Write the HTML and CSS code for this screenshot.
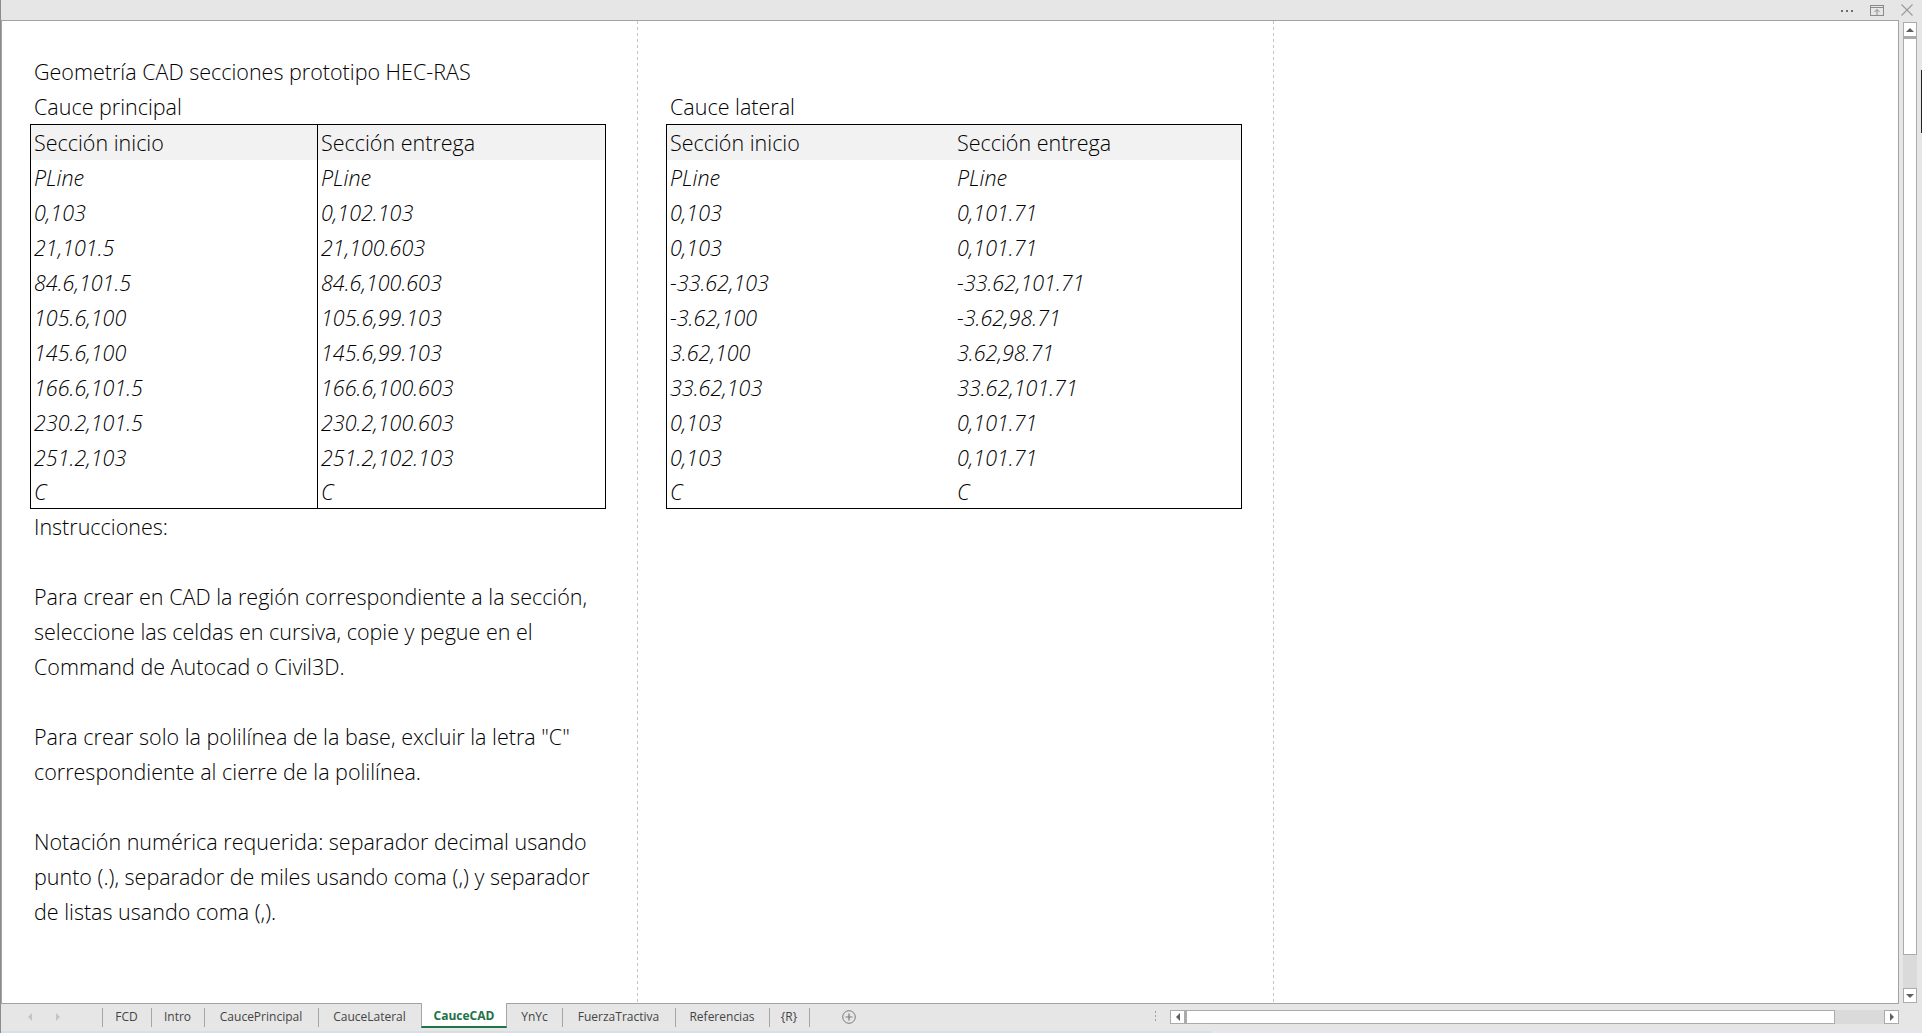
FILE: index.html
```html
<!DOCTYPE html>
<html lang="es">
<head>
<meta charset="utf-8">
<title>CauceCAD</title>
<link rel="stylesheet" href="styles.css">
</head>
<body>
<div class="window">
  <div class="titlebar">
    <svg class="tb-icon dots" width="14" height="4" viewBox="0 0 14 4"><rect x="0" y="1" width="2" height="2" fill="#6e6e6e"/><rect x="5" y="1" width="2" height="2" fill="#6e6e6e"/><rect x="10" y="1" width="2" height="2" fill="#6e6e6e"/></svg>
    <svg class="tb-icon restore" width="14" height="11" viewBox="0 0 14 11"><rect x="0.5" y="0.5" width="13" height="10" fill="none" stroke="#8a8a8a"/><line x1="0.5" y1="2.5" x2="13.5" y2="2.5" stroke="#8a8a8a"/><path d="M7 10V4.5M4.5 7L7 4.5L9.5 7" fill="none" stroke="#8a8a8a"/></svg>
    <svg class="tb-icon close" width="12" height="12" viewBox="0 0 12 12"><path d="M0.5 0.5L11.5 11.5M11.5 0.5L0.5 11.5" stroke="#9a9a9a" stroke-width="1.1"/></svg>
  </div>

  <div class="main">
    <div class="sheet">
      <div class="pagebreak pb1"></div>
      <div class="pagebreak pb2"></div>

      <div class="block">
        <div class="row">Geometría CAD secciones prototipo HEC-RAS</div>
        <div class="row">Cauce principal</div>
        <div class="tbl ruled">
          <div class="cell head">Sección inicio</div><div class="cell head">Sección entrega</div>
          <div class="cell it">PLine</div><div class="cell it">PLine</div>
          <div class="cell it">0,103</div><div class="cell it">0,102.103</div>
          <div class="cell it">21,101.5</div><div class="cell it">21,100.603</div>
          <div class="cell it">84.6,101.5</div><div class="cell it">84.6,100.603</div>
          <div class="cell it">105.6,100</div><div class="cell it">105.6,99.103</div>
          <div class="cell it">145.6,100</div><div class="cell it">145.6,99.103</div>
          <div class="cell it">166.6,101.5</div><div class="cell it">166.6,100.603</div>
          <div class="cell it">230.2,101.5</div><div class="cell it">230.2,100.603</div>
          <div class="cell it">251.2,103</div><div class="cell it">251.2,102.103</div>
          <div class="cell it last">C</div><div class="cell it last">C</div>
        </div>
        <div class="row">Instrucciones:</div>
        <div class="row"></div>
        <div class="row">Para crear en CAD la región correspondiente a la sección,</div>
        <div class="row">seleccione las celdas en cursiva, copie y pegue en el</div>
        <div class="row">Command de Autocad o Civil3D.</div>
        <div class="row"></div>
        <div class="row">Para crear solo la polilínea de la base, excluir la letra "C"</div>
        <div class="row">correspondiente al cierre de la polilínea.</div>
        <div class="row"></div>
        <div class="row">Notación numérica requerida: separador decimal usando</div>
        <div class="row">punto (.), separador de miles usando coma (,) y separador</div>
        <div class="row">de listas usando coma (,).</div>
      </div>

      <div class="block">
        <div class="row"></div>
        <div class="row">Cauce lateral</div>
        <div class="tbl">
          <div class="cell head">Sección inicio</div><div class="cell head">Sección entrega</div>
          <div class="cell it">PLine</div><div class="cell it">PLine</div>
          <div class="cell it">0,103</div><div class="cell it">0,101.71</div>
          <div class="cell it">0,103</div><div class="cell it">0,101.71</div>
          <div class="cell it">-33.62,103</div><div class="cell it">-33.62,101.71</div>
          <div class="cell it">-3.62,100</div><div class="cell it">-3.62,98.71</div>
          <div class="cell it">3.62,100</div><div class="cell it">3.62,98.71</div>
          <div class="cell it">33.62,103</div><div class="cell it">33.62,101.71</div>
          <div class="cell it">0,103</div><div class="cell it">0,101.71</div>
          <div class="cell it">0,103</div><div class="cell it">0,101.71</div>
          <div class="cell it last">C</div><div class="cell it last">C</div>
        </div>
      </div>
    </div>

    <div class="vscroll">
      <div class="sb-btn"><span class="tri up"></span></div>
      <div class="sb-thumb v"></div>
      <div class="sb-trough v"></div>
      <div class="sb-btn"><span class="tri down"></span></div>
    </div>
  </div>

  <div class="tabbar">
    <div class="tabs">
      <div class="nav"><span class="tri left light"></span><span class="tri right light"></span></div>
      <div class="tab">FCD</div>
      <div class="tab">Intro</div>
      <div class="tab">CaucePrincipal</div>
      <div class="tab">CauceLateral</div>
      <div class="tab active">CauceCAD</div>
      <div class="tab">YnYc</div>
      <div class="tab">FuerzaTractiva</div>
      <div class="tab">Referencias</div>
      <div class="tab">{R}</div>
      <div class="tab add">
        <svg width="14" height="14" viewBox="0 0 14 14"><circle cx="7" cy="7" r="6.3" fill="none" stroke="#7a7a7a"/><path d="M7 3.5V10.5M3.5 7H10.5" stroke="#7a7a7a" stroke-width="1.2"/></svg>
      </div>
    </div>
    <div class="splitter"><i></i><i></i><i></i></div>
    <div class="hscroll">
      <div class="sb-btn"><span class="tri left"></span></div>
      <div class="sb-thumb h"></div>
      <div class="sb-trough h"></div>
      <div class="sb-btn"><span class="tri right"></span></div>
    </div>
  </div>
  <div class="strip"></div>
  <div class="edge-mark"></div>
</div>
</body>
</html>
```
FILE: styles.css
```css
html, body {
  margin: 0;
  padding: 0;
  background: #e6e6e6;
  overflow: hidden;
}

.window {
  position: relative;
  width: 1922px;
  height: 1033px;
  box-sizing: border-box;
  border-left: 1px solid #8c8c8c;
  display: flex;
  flex-direction: column;
  background: #e6e6e6;
  font-family: "Open Sans", "Noto Sans", sans-serif;
}

/* ---------- title bar ---------- */
.titlebar {
  height: 20px;
  flex: none;
  display: flex;
  align-items: center;
  justify-content: flex-end;
  padding-right: 9px;
}
.tb-icon { display: block; }
.dots { margin-right: 15px; margin-top: 1px; }
.restore { margin-right: 17px; }
.close { margin-right: 0; }

/* ---------- sheet area ---------- */
.main {
  height: 984px;
  flex: none;
  display: flex;
}

.sheet {
  position: relative;
  flex: 1;
  background: #fff;
  border: 1px solid #a3a3a3;
  padding: 33px 0 0 28px;
  display: flex;
  gap: 60px;
  overflow: hidden;
  color: #000;
  font-weight: 300;
  font-size: 21.5px;
}

.pagebreak {
  position: absolute;
  top: 0;
  bottom: 0;
  width: 1px;
  background: repeating-linear-gradient(to bottom, #c4c4c4 0 3px, transparent 3px 6px);
}
.pb1 { left: 635px; }
.pb2 { left: 1271px; }

.block {
  width: 576px;
  flex: none;
}

.row {
  height: 35px;
  line-height: 35px;
  padding-left: 4px;
  white-space: nowrap;
}

.tbl {
  display: grid;
  grid-template-columns: 287px 287px;
  border: 1px solid #000;
}

.cell {
  height: 35px;
  line-height: 35px;
  padding-left: 3px;
  white-space: nowrap;
  box-sizing: border-box;
}
.cell.last { height: 33px; line-height: 33px; }
.cell.head { background: #f2f2f2; }
.cell.it { font-style: italic; }

.ruled .cell:nth-child(odd) { border-right: 1px solid #000; }

/* ---------- vertical scrollbar ---------- */
.vscroll {
  width: 23px;
  flex: none;
  box-sizing: border-box;
  padding: 2px 5px 0 4px;
  display: flex;
  flex-direction: column;
}

.sb-btn {
  box-sizing: border-box;
  width: 14px;
  height: 15px;
  border: 1px solid #ababab;
  background: #fff;
  display: flex;
  align-items: center;
  justify-content: center;
  flex: none;
}

.sb-thumb.v {
  height: 918px;
  box-sizing: border-box;
  border: 1px solid #ababab;
  border-top-width: 2px;
  background: #fff;
}
.sb-trough.v {
  height: 33px;
  background: #dadada;
}

.tri { display: block; width: 0; height: 0; }
.tri.up { border-left: 4px solid transparent; border-right: 4px solid transparent; border-bottom: 4px solid #606060; }
.tri.down { border-left: 4px solid transparent; border-right: 4px solid transparent; border-top: 4px solid #606060; }
.tri.left { border-top: 4px solid transparent; border-bottom: 4px solid transparent; border-right: 4px solid #606060; }
.tri.right { border-top: 4px solid transparent; border-bottom: 4px solid transparent; border-left: 4px solid #606060; }
.tri.light.left { border-right-color: #c4c4c4; }
.tri.light.right { border-left-color: #c4c4c4; }

/* ---------- tab bar ---------- */
.tabbar {
  height: 27px;
  flex: none;
  display: flex;
  align-items: stretch;
}

.tabs {
  display: grid;
  grid-template-columns: 101px 49px 53px 114px 103px 86px 55px 113px 94px 40px 80px;
  align-items: stretch;
}

.nav {
  display: flex;
  align-items: center;
  gap: 24px;
  padding-left: 27px;
  padding-bottom: 2px;
}

.tab {
  position: relative;
  display: flex;
  align-items: center;
  justify-content: center;
  font-size: 12px;
  color: #444;
  padding-bottom: 2px;
  white-space: nowrap;
}
.tab::before {
  content: "";
  position: absolute;
  left: 0;
  top: 4px;
  height: 19px;
  width: 1px;
  background: #a6a6a6;
}
.tab.active {
  background: #fff;
  color: #217346;
  font-weight: 700;
  margin-top: -1px;
  margin-bottom: 3px;
  border-left: 1px solid #a6a6a6;
  border-right: 1px solid #a6a6a6;
  border-bottom: 2px solid #217346;
  padding-bottom: 0;
  padding-top: 1px;
}
.tab.active::before,
.tab.active + .tab::before { display: none; }
.tab.add { justify-content: flex-start; padding-left: 33px; }

.splitter {
  margin-left: auto;
  margin-right: 14px;
  display: flex;
  flex-direction: column;
  justify-content: center;
  gap: 2px;
  padding-bottom: 3px;
}
.splitter i {
  display: block;
  width: 1px;
  height: 2px;
  background: #a0a0a0;
}

.hscroll {
  width: 729px;
  margin-right: 23px;
  margin-top: 6px;
  height: 14px;
  display: flex;
}
.hscroll .sb-btn { width: 15px; height: 14px; }
.sb-thumb.h {
  width: 650px;
  box-sizing: border-box;
  border: 1px solid #ababab;
  border-left-width: 2px;
  background: #fff;
}
.sb-trough.h {
  flex: 1;
  background: #dadada;
}

.strip {
  height: 2px;
  flex: none;
  background: linear-gradient(to right, #d6dee8 0, #d6dee8 1210px, #e4e8ee 1210px);
}

.edge-mark {
  position: absolute;
  right: 0;
  top: 70px;
  width: 1px;
  height: 63px;
  background: #222;
}
```
